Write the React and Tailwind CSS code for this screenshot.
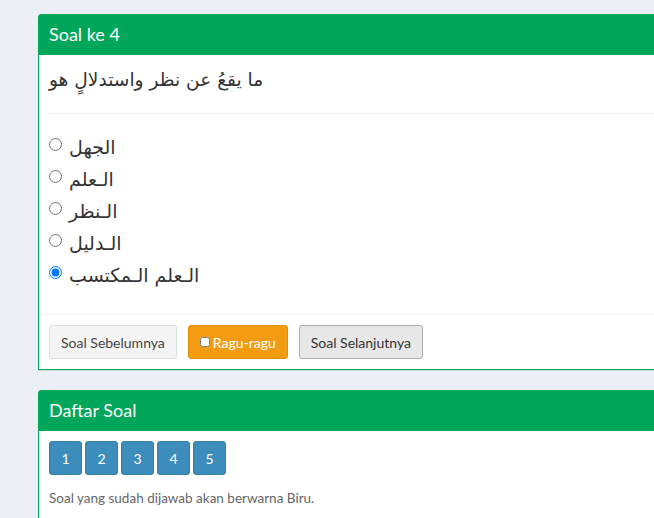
import React from 'react';

const options = ['الجهل', 'الـعلم', 'الـنظر', 'الـدليل', 'الـعلم الـمكتسب'];

const Card = ({ title, children }) => (
    <div className="w-[660px] bg-white border border-[#00a65a] rounded-t-[3px] shadow-[0_1px_1px_rgba(0,0,0,0.1)]">
        <div className="h-[40px] bg-[#00a65a] text-white text-[18px] px-[10px] pb-[2px] flex items-center">
            {title}
        </div>
        {children}
    </div>
);

const App = () => {
    return (
        <div
            className="min-h-screen bg-[#ecf0f5] pl-[38px] pt-[14px] overflow-hidden text-[#333]"
            style={{ fontFamily: 'Lato, "Noto Sans", sans-serif' }}
        >
            <Card title="Soal ke 4">
                <div className="px-[10px] pt-[10px] pb-[23px]">
                    <p className="text-[18.6px] leading-[30px]" style={{ fontFamily: '"DejaVu Sans", sans-serif' }}>
                        ما يقعُ عن نظر واستدلالٍ هو
                    </p>
                    <div className="h-px bg-[#eee] mt-[18px] mb-[17px]" />
                    {options.map((o, i) => (
                        <label key={i} className="flex items-center h-[32px]">
                            <input
                                type="radio"
                                name="jawab"
                                defaultChecked={i === 4}
                                className="w-[13px] h-[13px] m-0 mr-[7px] mb-[6px]"
                            />
                            <span className="text-[19px]" style={{ fontFamily: '"DejaVu Sans", sans-serif' }}>{o}</span>
                        </label>
                    ))}
                </div>
                <div className="border-t border-[#f4f4f4] px-[10px] py-[10px] flex gap-[11px]">
                    <button className="h-[34px] px-[11px] text-[14px] bg-[#f4f4f4] border border-[#ddd] rounded-[3px] text-[#444]">
                        Soal Sebelumnya
                    </button>
                    <button className="h-[34px] px-[11px] text-[14px] bg-[#f39c12] border border-[#e08e0b] rounded-[3px] text-white flex items-center gap-[3px]">
                        <input type="checkbox" className="w-[10px] h-[10px] m-0" />
                        Ragu-ragu
                    </button>
                    <button className="h-[34px] px-[11px] text-[14px] bg-[#e7e7e7] border border-[#adadad] rounded-[3px] text-[#333]">
                        Soal Selanjutnya
                    </button>
                </div>
            </Card>
            <div className="h-[20px]" />
            <Card title="Daftar Soal">
                <div className="px-[10px] pt-[10px] pb-[20px]">
                    <div className="flex gap-[3px]">
                        {[1, 2, 3, 4, 5].map((n) => (
                            <button
                                key={n}
                                className="w-[33px] h-[34px] bg-[#3c8dbc] border border-[#367fa9] rounded-[3px] text-white text-[14px]"
                            >
                                {n}
                            </button>
                        ))}
                    </div>
                    <p className="text-[13.5px] text-[#666] mt-[13px]">Soal yang sudah dijawab akan berwarna Biru.</p>
                </div>
            </Card>
        </div>
    );
};

export default App;
